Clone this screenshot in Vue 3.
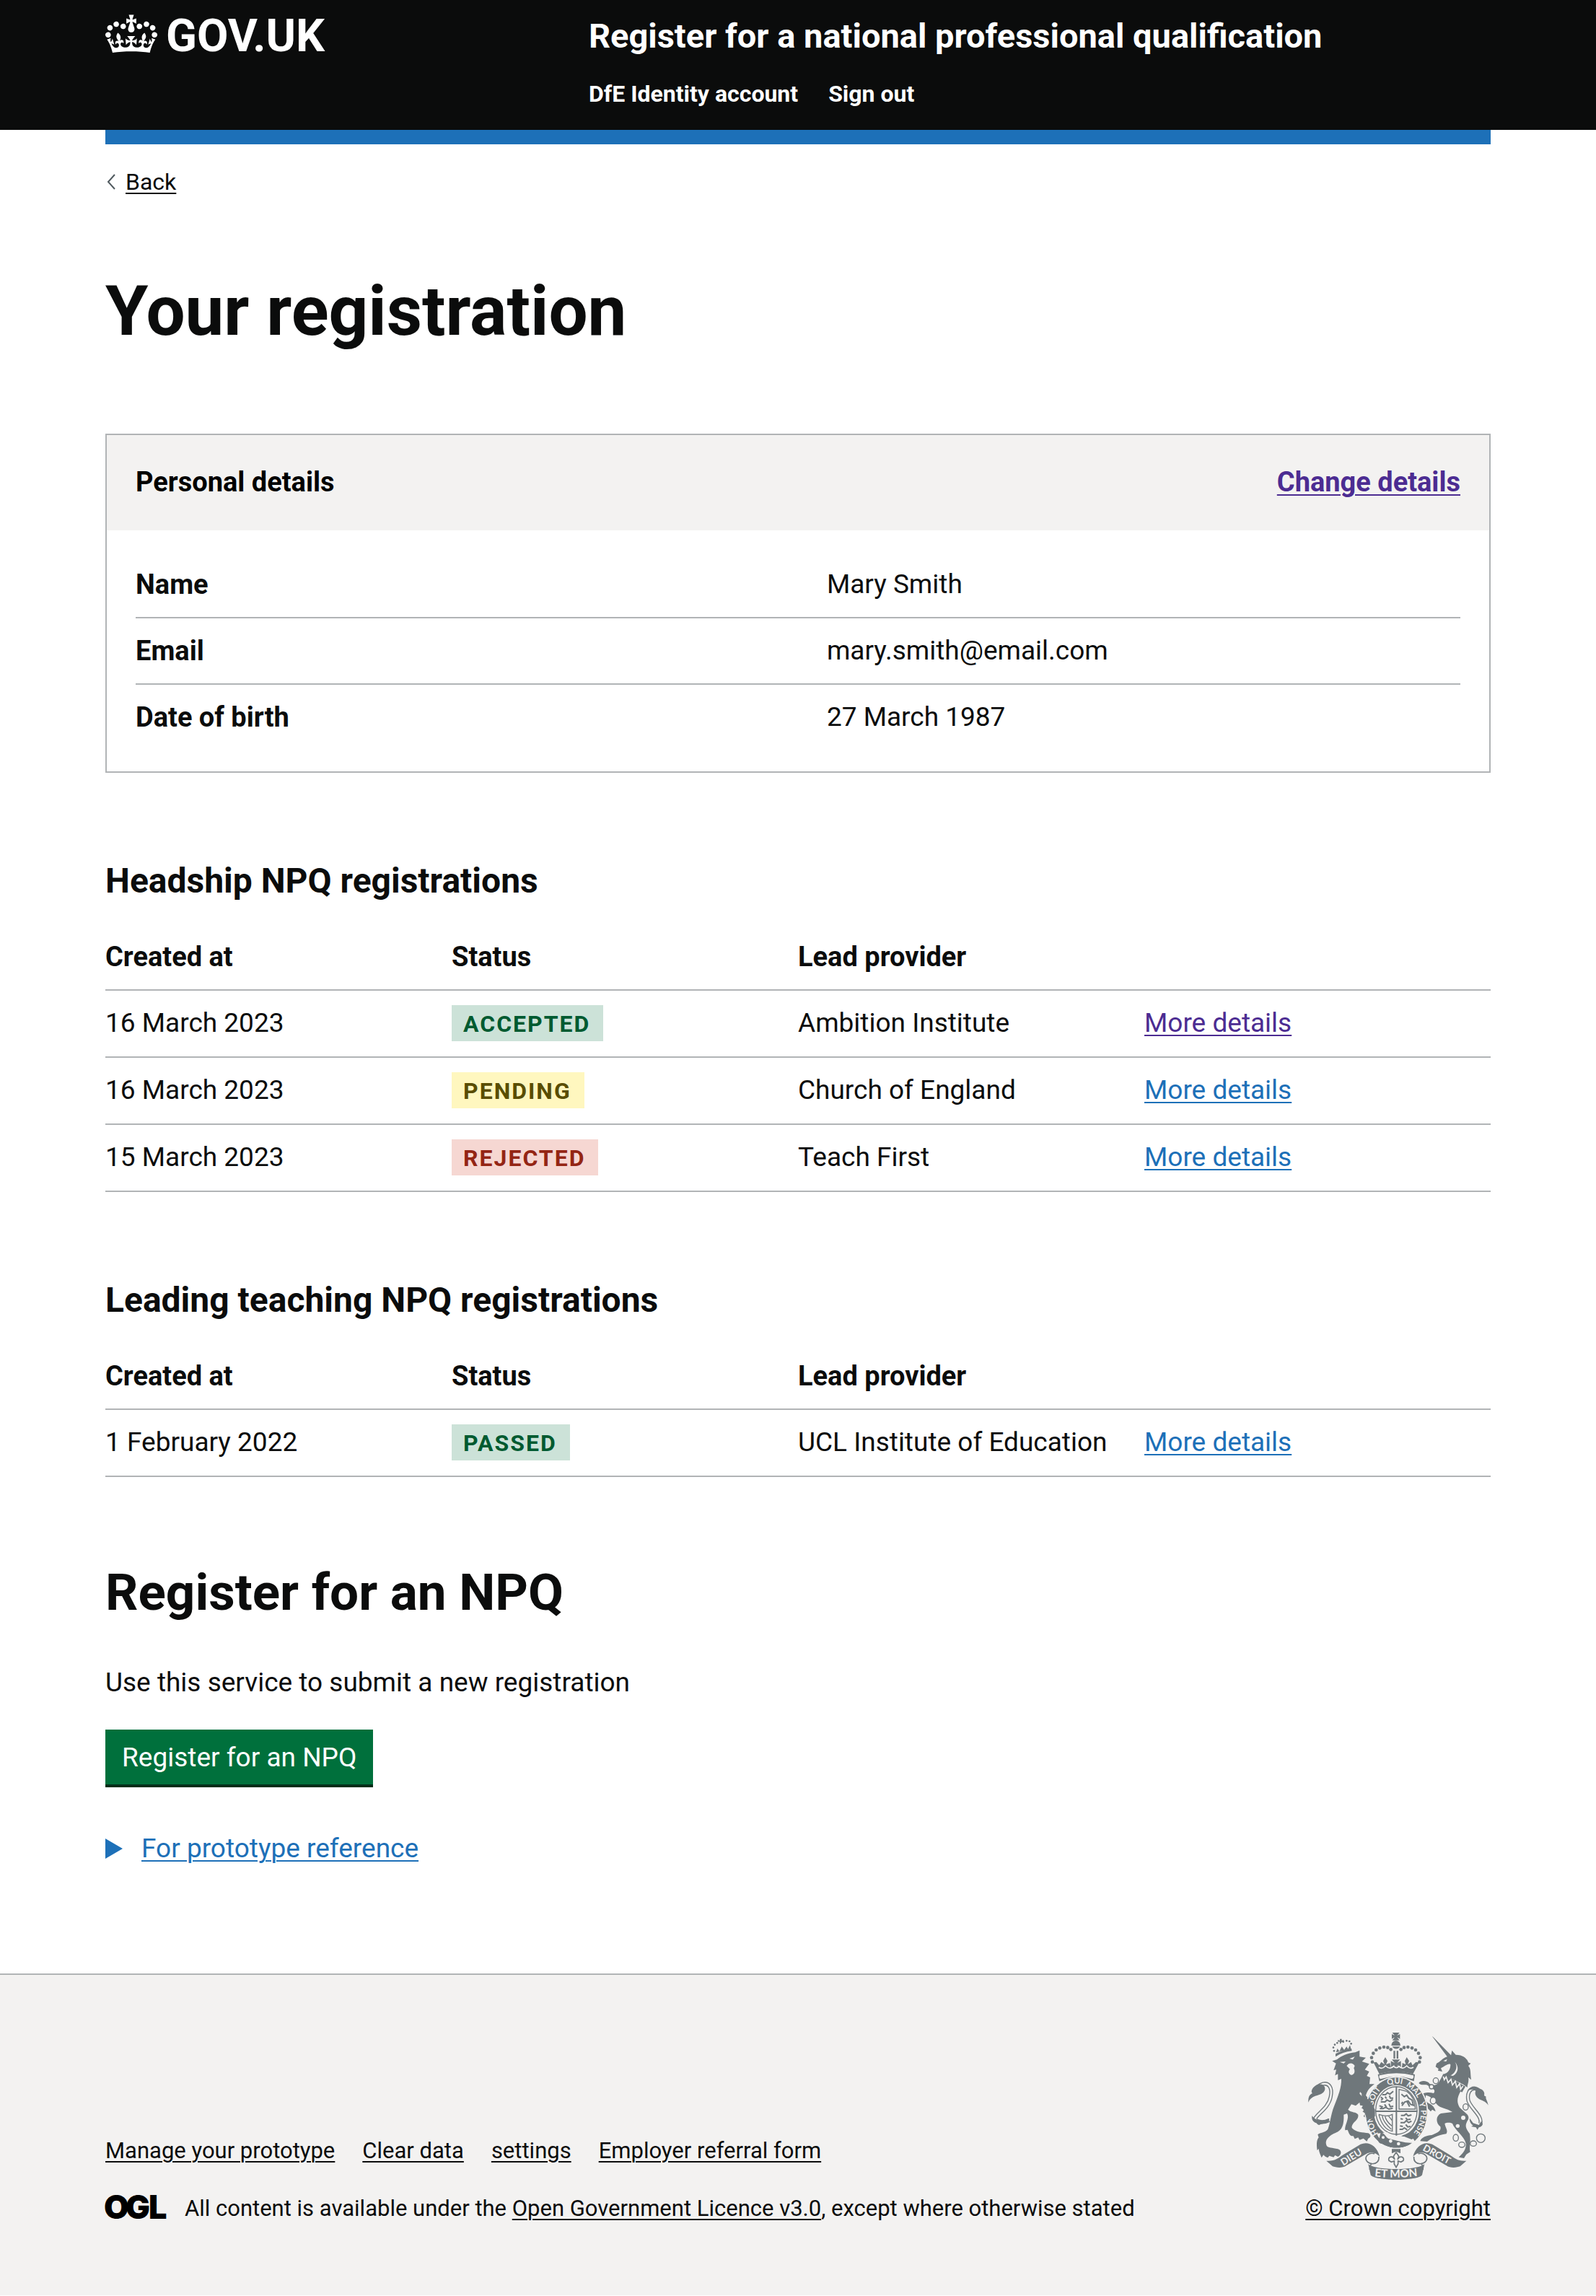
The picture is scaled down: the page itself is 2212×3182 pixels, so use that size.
<script setup>
const personalDetails = [
  { key: 'Name', value: 'Mary Smith' },
  { key: 'Email', value: 'mary.smith@email.com' },
  { key: 'Date of birth', value: '27 March 1987' },
]

const registrationGroups = [
  {
    title: 'Headship NPQ registrations',
    rows: [
      { created: '16 March 2023', status: 'ACCEPTED', tone: 'green', provider: 'Ambition Institute', visited: true },
      { created: '16 March 2023', status: 'PENDING', tone: 'yellow', provider: 'Church of England', visited: false },
      { created: '15 March 2023', status: 'REJECTED', tone: 'red', provider: 'Teach First', visited: false },
    ],
  },
  {
    title: 'Leading teaching NPQ registrations',
    rows: [
      { created: '1 February 2022', status: 'PASSED', tone: 'green', provider: 'UCL Institute of Education', visited: false },
    ],
  },
]

const footerLinks = ['Manage your prototype', 'Clear data', 'settings', 'Employer referral form']

const crownBeads = [[357, 206], [354, 188], [361, 170], [373, 156], [388, 148], [405, 144], [421, 146], [434, 154]]
const lionBeads = [[198, 160], [195, 146], [201, 134], [211, 127], [236, 122], [250, 118], [262, 120], [269, 130]]
const chainLinks = [[621, 284, 11, 12], [603, 309, 9, 9], [610, 367, 12, 14], [745, 393, 11, 13], [704, 521, 11, 14], [729, 550, 13, 11], [777, 545, 13, 11], [808, 523, 18, 18]]
</script>

<template>
  <div class="page">
    <header class="header">
      <div class="container header-row">
        <div class="header-logo">
          <a href="#" class="logo-link">
            <svg class="crown" viewBox="0 0 132 97" aria-hidden="true">
              <path fill="currentColor" fill-rule="evenodd" d="M25 30.2c3.5 1.5 7.7-.2 9.1-3.7 1.5-3.6-.2-7.8-3.9-9.2-3.6-1.4-7.6.3-9.1 3.9-1.4 3.5.3 7.5 3.9 9zM9 39.5c3.6 1.5 7.8-.2 9.2-3.7 1.5-3.6-.2-7.8-3.9-9.1-3.6-1.5-7.6.2-9.1 3.8-1.4 3.5.3 7.5 3.8 9zM4.4 57.2c3.5 1.5 7.7-.2 9.1-3.8 1.5-3.6-.2-7.7-3.9-9.1-3.5-1.5-7.6.3-9.1 3.8-1.4 3.5.3 7.6 3.9 9.1zm38.3-21.4c3.5 1.5 7.7-.2 9.1-3.8 1.5-3.6-.2-7.7-3.9-9.1-3.6-1.5-7.6.3-9.1 3.8-1.3 3.6.4 7.7 3.9 9.1zm64.4-5.6c-3.6 1.5-7.8-.2-9.1-3.7-1.5-3.6.2-7.8 3.8-9.2 3.6-1.4 7.7.3 9.2 3.9 1.3 3.5-.4 7.5-3.9 9zm15.9 9.3c-3.6 1.5-7.7-.2-9.1-3.7-1.5-3.6.2-7.8 3.7-9.1 3.6-1.5 7.7.2 9.2 3.8 1.5 3.5-.3 7.5-3.8 9zm4.7 17.7c-3.6 1.5-7.8-.2-9.2-3.8-1.5-3.6.2-7.7 3.9-9.1 3.6-1.5 7.7.3 9.2 3.8 1.3 3.5-.4 7.6-3.9 9.1zM89.3 35.8c-3.6 1.5-7.8-.2-9.2-3.8-1.4-3.6.2-7.7 3.9-9.1 3.6-1.5 7.7.3 9.2 3.8 1.4 3.6-.3 7.7-3.9 9.1zM69.7 17.7l8.9 4.7V9.3l-8.9 2.8c-.2-.3-.5-.6-.9-.9L72.4 0H59.6l3.5 11.2c-.3.3-.6.5-.9.9l-8.8-2.8v13.1l8.8-4.7c.3.3.6.7.9.9l-5 15.4v.1c-.2.8-.4 1.6-.4 2.4 0 4.1 3.1 7.5 7 8.1h.2c.3 0 .7.1 1 .1.4 0 .7 0 1-.1h.2c4-.6 7.1-4.1 7.1-8.1 0-.8-.1-1.7-.4-2.4V34l-5.1-15.4c.4-.2.7-.6 1-.9zM66 92.8c16.9 0 32.8 1.1 47.1 3.2 4-16.9 8.9-26.7 14-33.5l-9.6-3.4c1 4.9 1.1 7.2 0 10.2-1.5-1.4-3-4.3-4.2-8.7L108.6 76c2.8-2 5-3.2 7.5-3.3-4.4 9.4-10 11.9-13.6 11.2-4.3-.8-6.3-4.6-5.6-7.9 1-4.7 5.7-5.9 8-.5 4.3-8.7-3-11.4-7.6-8.8 7.1-7.2 7.9-13.5 2.1-21.1-8 6.1-8.1 12.3-4.5 20.8-4.7-5.4-12.1-2.5-9.5 6.2 3.4-5.2 7.9-2 7.2 3.1-.6 4.3-6.4 7.8-13.5 7.2-10.3-.9-10.9-8-11.2-13.8 2.5-.5 7.1 1.8 11 7.3L80.2 60c-4.1 4.4-8 5.3-12.3 5.4 1.4-4.4 8-11.6 8-11.6H55.5s6.4 7.2 7.9 11.6c-4.2-.1-8-1-12.3-5.4l1.4 16.4c3.9-5.5 8.5-7.7 10.9-7.3-.3 5.8-.9 12.8-11.1 13.8-7.2.6-12.9-2.9-13.5-7.2-.7-5 3.8-8.3 7.1-3.1 2.7-8.7-4.6-11.6-9.4-6.2 3.7-8.5 3.6-14.7-4.6-20.8-5.8 7.6-5 13.9 2.2 21.1-4.7-2.6-11.9.1-7.7 8.8 2.3-5.5 7.1-4.2 8.1.5.7 3.3-1.3 7.1-5.7 7.9-3.5.7-9-1.8-13.5-11.2 2.5.1 4.7 1.3 7.5 3.3l-4.7-15.4c-1.2 4.4-2.7 7.2-4.3 8.7-1.1-3-.9-5.3 0-10.2l-9.5 3.4c5 6.9 9.9 16.7 14 33.5 14.8-2.1 30.8-3.2 47.7-3.2z" />
            </svg>
            <span>GOV.UK</span>
          </a>
        </div>
        <div class="header-content">
          <a href="#" class="service-name">Register for a national professional qualification</a>
          <nav class="header-nav">
            <a href="#">DfE Identity account</a>
            <a href="#">Sign out</a>
          </nav>
        </div>
      </div>
    </header>

    <div class="container">
      <div class="phase-bar"></div>
      <a href="#" class="back-link">
        <svg class="chevron" viewBox="0 0 14 24" aria-hidden="true"><path d="M12 2 3 12l9 10" fill="none" stroke="#505a5f" stroke-width="2" /></svg>
        <span>Back</span>
      </a>

      <main class="main">
        <h1>Your registration</h1>

        <section class="card">
          <div class="card-header">
            <h2>Personal details</h2>
            <a href="#" class="link visited">Change details</a>
          </div>
          <dl class="summary">
            <div v-for="item in personalDetails" :key="item.key" class="summary-row">
              <dt>{{ item.key }}</dt>
              <dd>{{ item.value }}</dd>
            </div>
          </dl>
        </section>

        <section v-for="group in registrationGroups" :key="group.title" class="group">
          <h2 class="heading-m">{{ group.title }}</h2>
          <table>
            <thead>
              <tr>
                <th scope="col">Created at</th>
                <th scope="col">Status</th>
                <th scope="col">Lead provider</th>
                <td></td>
              </tr>
            </thead>
            <tbody>
              <tr v-for="row in group.rows" :key="row.status">
                <td>{{ row.created }}</td>
                <td><strong class="tag" :class="row.tone">{{ row.status }}</strong></td>
                <td>{{ row.provider }}</td>
                <td><a href="#" class="link" :class="{ visited: row.visited }">More details</a></td>
              </tr>
            </tbody>
          </table>
        </section>

        <h2 class="heading-l">Register for an NPQ</h2>
        <p>Use this service to submit a new registration</p>
        <button type="button" class="button">Register for an NPQ</button>

        <details class="details">
          <summary>
            <svg class="arrow" viewBox="0 0 24 28" aria-hidden="true"><path d="M0 0 24 14 0 28z" fill="#1d70b8" /></svg>
            <span class="link">For prototype reference</span>
          </summary>
        </details>
      </main>
    </div>

    <footer class="footer">
      <div class="container footer-row">
        <div class="footer-meta">
          <ul class="footer-links">
            <li v-for="label in footerLinks" :key="label"><a href="#">{{ label }}</a></li>
          </ul>
          <div class="licence">
            <svg class="ogl" viewBox="0 0 82 36" role="img" aria-label="Open Government Licence">
              <text x="-2 28 60" y="34">OGL</text>
            </svg>
            <span>All content is available under the <a href="#">Open Government Licence v3.0</a>, except where otherwise stated</span>
          </div>
        </div>
        <a href="#" class="copyright">
          <svg class="crest" viewBox="90 84 750 612" aria-hidden="true">
            <defs>
              <path id="arc-hon" d="M382 504A101 118 0 0 1 357 422" />
              <path id="arc-soit" d="M360 386A101 118 0 0 1 418 302" />
              <path id="arc-qui" d="M422 304A101 118 0 0 1 496 304" />
              <path id="arc-mal" d="M496 306A101 118 0 0 1 552 374" />
              <path id="arc-y" d="M550 376A101 118 0 0 1 558 412" />
              <path id="arc-pense" d="M558 406A101 118 0 0 1 500 524" />
              <path id="arc-dieu" d="M236 638 346 570" />
              <path id="arc-mon" d="M366 682Q457 692 556 679" />
              <path id="arc-droit" d="M564 572 710 652" />
            </defs>

            <!-- lion -->
            <g class="ink">
              <path class="tail" d="M178 448C150 462 118 454 120 440 130 420 176 396 184 350 192 312 176 292 152 297 134 302 124 314 118 330" />
              <path class="tail-core" d="M178 448C150 462 118 454 120 440 130 420 176 396 184 350 192 312 176 292 152 297 134 302 124 314 118 330" />
              <path d="M91 374C90 350 96 342 108 336 98 332 108 306 134 298 150 296 162 306 160 320 156 338 136 342 120 347 106 352 96 360 91 374ZM106 430 116 440C134 452 156 452 178 440L176 456C160 462 146 462 136 468 126 466 128 462 124 460 112 456 104 448 106 430Z" />
              <path d="M190 202 206 212 196 240 207 238 202 262 214 256 214 282 228 276C230 310 214 350 198 390 184 425 182 460 172 486 158 502 140 498 130 508L134 520C126 530 124 545 128 574L134 566C136 584 142 592 146 604L154 592C160 600 166 602 172 604L178 596 196 602 202 594 214 600C232 590 232 568 205 566 184 560 168 564 165 548 160 530 176 512 205 500 232 490 240 465 238 425L252 420C264 440 240 470 244 490L254 488C262 505 262 515 278 514L284 526 298 520 304 530 320 524 334 536 340 524C352 520 352 508 340 502 318 498 290 500 272 480 270 455 302 450 298 425 290 412 270 418 256 404L270 382 288 388 304 374 306 386 318 388 312 398 326 404 316 412 328 420 320 432 334 440 344 434 350 444 366 438C376 420 364 395 350 370L330 345C338 320 350 310 366 298L345 298 348 270 334 264 344 246 326 238 344 214 314 204 330 188 304 184 304 158 286 166C256 168 226 182 210 196Z" />
              <path class="paper" d="M222 206 246 204 238 212ZM262 192 284 184 276 196ZM258 214C268 208 278 212 284 222L280 232C288 248 280 260 270 260 258 256 256 244 264 236L250 222Z" />
              <path class="paper" d="M306 330 358 386 362 400 304 338Z" />
              <path d="M204 184Q234 164 272 160L270 150Q234 156 204 172ZM224 132 220 120 214 124V114L222 118V110H230L230 118 238 114V124L230 122ZM206 166 212 150 220 162 230 142 240 156 250 142 256 152 264 136 268 150Z" />
              <circle v-for="(b, i) in lionBeads" :key="'l' + i" :cx="b[0]" :cy="b[1]" r="4" />
            </g>

            <!-- unicorn -->
            <g class="ink">
              <path class="tail" d="M806 462C816 430 766 400 756 366 750 336 764 314 784 316 800 320 806 334 812 350" />
              <path class="tail-core" d="M806 462C816 430 766 400 756 366 750 336 764 314 784 316 800 320 806 334 812 350" />
              <path d="M752 326C760 308 790 306 806 318 824 324 824 338 822 346L830 350C826 358 836 366 839 386 830 368 808 366 796 356 784 346 782 334 788 324 774 318 764 320 752 326ZM762 440 776 460 800 468 810 452 816 464C814 472 808 476 800 478L794 488 788 478 768 474 776 470C766 462 760 452 762 440Z" />
              <path d="M605 98 612 104 690 184 670 186Z" />
              <path d="M620 226 624 212C640 206 646 192 668 184L684 180 688 158 704 176C740 176 752 196 756 208L766 212 756 222C768 236 764 250 768 280L756 270C760 290 752 296 752 312L736 300 650 258C674 252 682 236 682 216 672 210 655 226 642 232L648 246 630 242 632 234Z" />
              <path class="paper" d="M652 202 668 194 664 204ZM700 206C716 228 700 254 682 262L692 264C716 250 718 224 700 206Z" />
              <path d="M652 256 744 308 730 332 640 280Z" />
              <path class="line" d="M652 266 656 280 664 268 672 292 684 278 690 302 702 286 708 312 720 296 724 320 734 306" />
              <path d="M640 278 724 328C712 350 705 370 720 395 745 420 762 425 756 445 740 470 744 480 762 505 768 545 758 560 764 580L748 590 738 606 716 602C728 590 748 575 746 545 740 515 700 490 690 462 680 456 664 458 658 462 660 480 674 490 664 505 630 510 600 525 585 537L556 535C562 518 582 512 604 510 625 500 645 495 640 475 620 460 620 430 642 420L690 414C665 398 640 400 625 382 612 365 605 350 580 344 576 358 580 372 592 378 608 386 616 395 620 412L606 404 600 412 588 400C575 385 560 370 558 346 566 332 594 330 612 336 620 325 615 318 595 312 584 290 566 310 550 294 560 280 586 284 595 296 615 310 630 300 640 278Z" />
              <ellipse v-for="(c, i) in chainLinks" :key="'c' + i" class="chain" :cx="c[0]" :cy="c[1]" :rx="c[2]" :ry="c[3]" />
              <ellipse class="paper" cx="735" cy="438" rx="9" ry="9" />
              <ellipse class="paper" cx="712" cy="472" rx="8" ry="8" />
            </g>

            <!-- crown -->
            <g class="ink">
              <path d="M440 84H470L460 96 472 90V110L460 103 470 116H440L450 103 438 110V90L450 96ZM436 138A19 21 0 0 1 474 138Z" />
              <path d="M440 142H472A17 14 0 0 1 440 142ZM445 160H452V192H445ZM458 160H465V192H458ZM438 196H472L460 210 476 202V228L460 218 470 232H440L450 218 434 228V202L450 210Z" />
              <path d="M411 186 420 202 414 216 430 210 434 228 480 228 482 210 496 216 492 202 500 186 510 202 504 216 518 206 524 220 538 206 552 208 526 256Q457 236 386 256L362 208 374 206 386 220 394 206 408 216 402 202Z" />
              <path class="line" d="M384 228Q398 238 412 222 430 240 446 224 457 236 468 224 482 240 500 222 514 238 528 228" />
              <path d="M380 258Q457 232 534 258L530 286Q457 258 386 286Z" />
              <path class="paper" d="M386 262Q457 244 528 262C530 274 524 278 520 276Q457 256 394 276C388 278 384 272 386 262Z" />
              <g v-for="(b, i) in crownBeads" :key="'b' + i">
                <circle :cx="b[0]" :cy="b[1]" r="7" />
                <circle :cx="910 - b[0]" :cy="b[1]" r="7" />
              </g>
            </g>

            <!-- garter and shield -->
            <g class="ink">
              <ellipse cx="457" cy="417" rx="129" ry="148" class="halo" />
              <ellipse cx="457" cy="417" rx="127" ry="146" />
              <ellipse class="paper" cx="457" cy="410" rx="94" ry="108" />
              <ellipse class="frame" cx="457" cy="408" rx="86" ry="99" />
              <path d="M454 308H460V512H454ZM370 408H544V414H370Z" />
              <path class="beast" d="M398 342h14l8-8 10 6 14-12M392 352l8 6-6 8M410 350l6 8M428 346l4 10 12 0M392 372h18l8-8 12 6 12-8M386 388l12 4-6 8M408 382l8 12M426 380l6 12 12-2M388 400h14l10-6 14 8 16-4" />
              <path class="beast" d="M476 428h14l8-6 8 8 14-4M474 442l10 2M496 438l6 8 14-2M474 458h16l8-8 10 8 12-6M472 472l12 2M496 466l8 10 12-2M470 486h12l8-6 12 8" />
              <path class="shield-line" d="M468 320V402H536Q534 350 500 328Z" />
              <path class="beast" d="M478 340l12 10 10-6 8 12 14 8 6 22-12-4-10-14-14 4-12 16M484 372l-6 8M502 372l10 20" />
              <path class="shield-line" d="M384 424Q420 436 440 424V494Q400 486 384 424M398 430Q402 456 436 486M410 432Q414 452 438 472M424 430L440 450" />
              <path class="paper" d="M376 504C386 534 424 566 470 562L536 540 520 512C480 520 440 516 420 498Z" />
              <path d="M392 500C412 500 410 522 430 526 460 534 496 544 522 542 500 560 470 564 440 560 414 554 400 546 400 546 382 548 376 528 386 522Z" />
              <path d="M480 512Q510 500 522 494L540 520 520 528Z" />
              <circle class="paper" cx="402" cy="520" r="6" />
              <circle class="paper" cx="433" cy="535" r="7" />
              <circle class="paper" cx="466" cy="546" r="7" />
            </g>
            <g class="motto">
              <text><textPath href="#arc-hon">HON</textPath></text>
              <text><textPath href="#arc-soit">SOIT</textPath></text>
              <text><textPath href="#arc-qui">QUI</textPath></text>
              <text><textPath href="#arc-mal">MAL</textPath></text>
              <text><textPath href="#arc-y">Y</textPath></text>
              <text><textPath href="#arc-pense">PENSE</textPath></text>
            </g>

            <!-- lion's paw over the garter -->
            <path class="ink" d="M312 336 350 372 368 404 368 432 350 444 334 440 318 400Z" />

            <!-- ribbon -->
            <g class="ink">
              <path d="M438 568H474V586L456 578 438 586Z" />
              <path class="outline" d="M456 582 467 598 462 612C472 592 492 602 486 616L476 622 464 618V630L456 644 448 630V618L436 622 426 616C420 602 440 592 450 612L445 598Z" />
              <path class="outline" d="M384 600C388 640 330 636 330 606 332 590 352 582 366 588M352 630Q346 640 346 654" />
              <path class="outline" d="M530 600C526 640 584 636 584 606 582 590 562 582 548 588M562 630Q568 640 568 654" />
              <path d="M166 617C200 620 216 606 236 592L308 548C340 534 376 552 388 600 376 586 356 578 336 586L250 636C230 650 204 644 192 640Z" />
              <path d="M748 617C714 620 698 606 678 592L606 548C574 534 538 552 526 600 538 586 558 578 578 586L664 636C684 650 710 644 722 640Z" />
              <path d="M340 630C366 658 548 658 574 630L564 676C548 702 366 702 350 676Z" />
            </g>
            <g class="motto scroll">
              <text><textPath href="#arc-dieu">DIEU</textPath></text>
              <text class="large"><textPath href="#arc-mon">ET MON</textPath></text>
              <text><textPath href="#arc-droit">DROIT</textPath></text>
            </g>
          </svg>
          <span>© Crown copyright</span>
        </a>
      </div>
    </footer>
  </div>
</template>

<style>
body {
  margin: 0;
  background: #fff;
}
</style>

<style scoped>
.page {
  font-family: Roboto, Arial, sans-serif;
  font-size: 37px;
  line-height: 50px;
  color: #0b0c0c;
}
.page * {
  box-sizing: border-box;
}
h1,
h2,
p,
dl,
dd,
ul {
  margin: 0;
  padding: 0;
}
.container {
  max-width: 1920px;
  margin: 0 auto;
}
a {
  color: inherit;
  text-decoration-thickness: 2px;
  text-underline-offset: 4px;
}
.link {
  color: #1d70b8;
  text-decoration: underline;
  text-decoration-thickness: 2px;
  text-underline-offset: 4px;
}
.link.visited {
  color: #4c2c92;
}

.header {
  background: #0b0c0c;
  color: #fff;
  font-weight: 700;
  padding: 20px 0 30px;
}
.header a {
  text-decoration: none;
}
.header-row {
  display: flex;
}
.header-logo {
  width: 33.33%;
}
.logo-link {
  display: inline-flex;
  align-items: flex-start;
  gap: 12px;
  font-size: 63px;
  line-height: 60px;
}
.crown {
  width: 72px;
  height: 54px;
}
.header-content {
  flex: 1;
  padding-left: 30px;
}
.service-name {
  display: block;
  font-size: 47px;
  line-height: 60px;
  margin-bottom: 30px;
}
.header-nav {
  display: flex;
  gap: 42px;
  font-size: 32px;
  line-height: 40px;
}
.phase-bar {
  height: 20px;
  background: #1d70b8;
}

.back-link {
  display: inline-flex;
  align-items: center;
  gap: 12px;
  margin-top: 32px;
  font-size: 32px;
  line-height: 40px;
}
.chevron {
  width: 16px;
  height: 24px;
}
.main {
  display: flow-root;
  padding: 104px 0 146px;
}
h1 {
  font-size: 96px;
  line-height: 100px;
  margin-bottom: 120px;
}

.card {
  border: 2px solid #b1b4b6;
}
.card-header {
  display: flex;
  justify-content: space-between;
  background: #f3f2f1;
  padding: 40px 40px 42px;
  font-size: 38px;
  font-weight: 700;
}
.card-header h2 {
  color: #000;
  font-size: 38px;
}
.summary {
  padding: 30px 40px;
}
.summary-row {
  display: grid;
  grid-template-columns: 12fr 11fr;
  padding: 20px 0;
}
.summary-row + .summary-row {
  border-top: 2px solid #b1b4b6;
}
dt {
  font-size: 38px;
  font-weight: 700;
}

.group {
  margin-top: 120px;
}
.heading-m {
  font-size: 48px;
  line-height: 60px;
  margin-bottom: 30px;
}
table {
  width: 100%;
  table-layout: fixed;
  border-collapse: separate;
  border-spacing: 0;
}
th,
td {
  padding: 20px 0;
  border-bottom: 2px solid #b1b4b6;
  text-align: left;
  vertical-align: top;
}
th {
  font-size: 38px;
}
tbody td {
  height: 93px;
}
.tag {
  display: inline-block;
  padding: 10px 18px 8px 16px;
  font-size: 32px;
  line-height: 32px;
  letter-spacing: 2px;
}
.green {
  background: #cce2d8;
  color: #005a30;
}
.yellow {
  background: #fff7bf;
  color: #594d00;
}
.red {
  background: #f6d7d2;
  color: #942514;
}

.heading-l {
  font-size: 71px;
  line-height: 80px;
  margin: 120px 0 60px;
}
.button {
  display: block;
  margin: 40px 0 64px;
  padding: 14px 23px 12px;
  border: 0;
  background: #00703c;
  color: #fff;
  box-shadow: 0 4px 0 #002d18;
  font: inherit;
}
summary {
  display: inline-flex;
  align-items: center;
  gap: 26px;
  list-style: none;
}
.arrow {
  width: 24px;
  height: 28px;
}

.footer {
  border-top: 2px solid #b1b4b6;
  background: #f3f2f1;
  padding: 80px 0 100px;
  font-size: 31px;
  line-height: 40px;
}
.footer-row {
  display: flex;
  justify-content: space-between;
  align-items: flex-end;
}
.footer-links {
  display: flex;
  gap: 38px;
  list-style: none;
  margin-bottom: 40px;
}
.licence {
  display: flex;
  align-items: flex-start;
  gap: 28px;
}
.ogl {
  width: 82px;
  height: 36px;
  overflow: visible;
  font-family: Inter, sans-serif;
  font-size: 45px;
  font-weight: 900;
}
.copyright {
  display: flex;
  flex-direction: column;
  align-items: center;
  gap: 20px;
}
.crest {
  width: 250px;
  height: 204px;
}
.ink {
  fill: #6f777b;
}
.paper {
  fill: #f3f2f1;
}
.tail,
.tail-core {
  fill: none;
  stroke: #6f777b;
  stroke-width: 16;
}
.tail-core {
  stroke: #f3f2f1;
  stroke-width: 8;
}
.line {
  fill: none;
  stroke: #f3f2f1;
  stroke-width: 5;
}
.chain {
  fill: #f3f2f1;
  stroke: #6f777b;
  stroke-width: 4;
}
.halo {
  stroke: #f3f2f1;
  stroke-width: 6;
}
.frame,
.shield-line,
.beast {
  fill: none;
  stroke: #6f777b;
  stroke-width: 4;
}
.beast {
  stroke-width: 6;
}
.outline {
  fill: #f3f2f1;
  stroke: #6f777b;
  stroke-width: 5;
}
.motto {
  fill: #f3f2f1;
  font-family: Lato, sans-serif;
  font-size: 33px;
  font-weight: 700;
}
.scroll {
  font-size: 40px;
}
.large {
  font-size: 46px;
}
</style>
